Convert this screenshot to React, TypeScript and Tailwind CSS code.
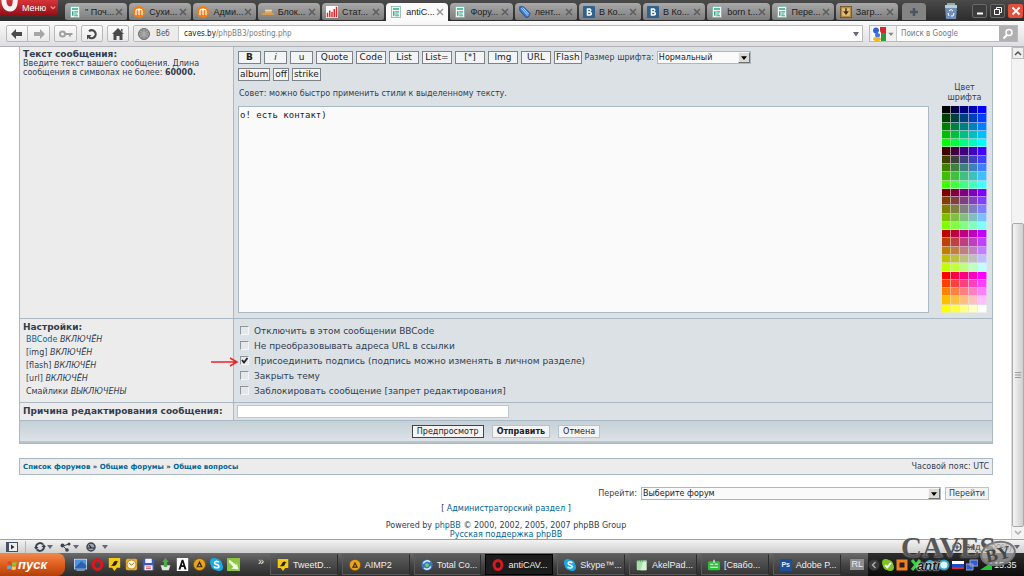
import React from "react";

type IconProps = { kind: string; className?: string };

function Icon({ kind, className = "size-3.5 shrink-0" }: IconProps) {
  const shapes: Record<string, React.ReactNode> = {
    page: (
      <>
        <rect x="2" y="0.5" width="12" height="15" fill="#eef7f2" stroke="#8aa" />
        <rect x="4" y="3" width="8" height="2" fill="#2fa88a" />
        <path d="M4 7h2v6H4zM7 7h5v1.5H7zM7 10h4v1.2H7zM7 12.4h5v1.2H7z" fill="#35ac8c" />
      </>
    ),
    moto: (
      <>
        <circle cx="8" cy="8" r="8" fill="#ee7f16" />
        <path d="M4 12V6.5a2 2 0 0 1 4 0V12M8 6.5a2 2 0 0 1 4 0V12M8 3v9" fill="none" stroke="#fff" strokeWidth="1.6" />
      </>
    ),
    hat: (
      <>
        <path d="M4 5h9v5H4z" fill="#e3b170" />
        <path d="M0 9h16v3H0z" fill="#d79a4f" />
        <path d="M4 5h9v1.5H4z" fill="#f6dcae" />
      </>
    ),
    chart: (
      <>
        <rect width="16" height="16" fill="#fff" />
        <path d="M1 9h2v6H1zM4 6h2v9H4zM7 8h2v7H7zM10 4h2v11h-2zM13 1h2v14h-2z" fill="#e3262c" />
      </>
    ),
    pencil: (
      <>
        <path d="M1 1l5 0 9 9-3 5-3 0L1 6z" fill="#3c7fd0" stroke="#173d78" />
        <path d="M3 3l9 10M5 2l8 9" stroke="#c4def8" strokeWidth="1.3" />
      </>
    ),
    vk: (
      <>
        <rect width="16" height="16" rx="1" fill="#2f628f" />
        <path d="M5 3h4a2.4 2.4 0 0 1 .8 4.6A2.7 2.7 0 0 1 9 13H5zM7 5v2h1.5a1 1 0 0 0 0-2zM7 9v2h1.8a1 1 0 0 0 0-2z" fill="#fff" fillRule="evenodd" />
      </>
    ),
    box: (
      <>
        <rect x="0.5" y="0.5" width="15" height="15" fill="#b98a45" stroke="#6d4a1c" />
        <rect x="3" y="3" width="10" height="10" fill="#e5c27c" />
        <path d="M7 3h2v4h3l-4 5-4-5h3z" fill="#4a3010" />
      </>
    ),
    opera: <ellipse cx="8" cy="8" rx="5.2" ry="6" fill="none" stroke="#d8181f" strokeWidth="4" />,
    tweet: (
      <>
        <path d="M1 0h14v12h-4l-3 4-3-4H1z" fill="#f6c912" />
        <path d="M3 9c3 0 3-3 5-5 1-1 3-1 3 0l2 .6-2 1c0 4-4 5-8 3.400z" fill="#2c2410" />
      </>
    ),
    aimp: (
      <>
        <circle cx="8" cy="8" r="7.500" fill="#e9a51e" stroke="#77500c" />
        <path d="M8 3.500l4 8H4zM8 7l-1.500 3h3z" fill="#3b2806" fillRule="evenodd" />
      </>
    ),
    total: (
      <>
        <circle cx="8" cy="8" r="7.500" fill="#3b77c4" />
        <path d="M3 6a5.500 5.500 0 0 1 9-2M13 10a5.500 5.500 0 0 1-9 2" stroke="#d9efff" strokeWidth="2" fill="none" />
        <circle cx="8" cy="8" r="2.500" fill="#6fcf6b" />
      </>
    ),
    skype: (
      <>
        <circle cx="5" cy="5" r="5" fill="#19a9e5" />
        <circle cx="11" cy="11" r="5" fill="#19a9e5" />
        <circle cx="8" cy="8" r="7" fill="#19a9e5" />
        <path d="M11 5.500C10 3.500 5.500 3.600 5.500 6S11 7.800 11 10.200 6 12.700 5 10.300" fill="none" stroke="#fff" strokeWidth="2" />
      </>
    ),
    skypeTray: (
      <>
        <circle cx="5" cy="5" r="5" fill="#7cc321" />
        <circle cx="11" cy="11" r="5" fill="#7cc321" />
        <circle cx="8" cy="8" r="7" fill="#7cc321" />
        <path d="M4 8l3 3 5-6" fill="none" stroke="#fff" strokeWidth="2.500" />
      </>
    ),
    akel: (
      <>
        <rect x="1" y="2" width="13" height="13" rx="1" fill="#a9dfae" />
        <path d="M10 2h4v13h-8z" fill="#d8f2d6" />
        <path d="M3 1v3M6 1v3M9 1v3M12 1v3" stroke="#4f9a58" />
      </>
    ),
    green: (
      <>
        <rect x="0" y="3" width="16" height="12" rx="2" fill="#2fbf3a" />
        <path d="M3 7h4M9 7h4M3 11h10M8 1v4" stroke="#fff" strokeWidth="1.500" />
      </>
    ),
    screen: (
      <>
        <rect x="0.500" y="1.500" width="15" height="12" fill="#4f93dc" stroke="#cfe2f5" />
        <path d="M1 12L9 4l6 5v4H1z" fill="#2a62ad" />
        <path d="M3 15h10" stroke="#cfd8e0" />
      </>
    ),
    clock: (
      <>
        <rect x="1" y="1" width="14" height="14" rx="2" fill="#e9a92f" />
        <circle cx="8" cy="8" r="5.500" fill="#fff3cf" stroke="#a97719" />
        <path d="M5 6l3 3 3-3" stroke="#705018" fill="none" />
      </>
    ),
    disk: (
      <>
        <path d="M1 1h14v14H1z" fill="#3c58c4" />
        <path d="M4 1h8v5H4zM3 9h10v6H3z" fill="#f2f4fb" />
        <path d="M5 11h6M5 13h6" stroke="#d33" />
      </>
    ),
    trash: (
      <>
        <path d="M2 9h12l-2 6H4z" fill="#dfe6e0" />
        <path d="M8 0l4 5h-2v6H6V5H4z" fill="#4cae46" />
      </>
    ),
    a: (
      <>
        <rect x="1" width="14" height="16" fill="#fff" />
        <path d="M3 14L7 2h2l4 12h-2.500l-1-3h-3l-1 3zM7.200 9h1.800L8 5.500z" fill="#111" fillRule="evenodd" />
      </>
    ),
    arrowPic: (
      <>
        <rect width="16" height="16" fill="#8ac640" />
        <path d="M3 2l9 7V5l2 9-9-1 3-2-6-6z" fill="#f4fbe9" />
      </>
    ),
  };
  return (
    <svg viewBox="0 0 16 16" className={className} aria-hidden="true">
      {shapes[kind]}
    </svg>
  );
}

const tabs = [
  { icon: "page", label: "\" Поч..." },
  { icon: "moto", label: "Сухи..." },
  { icon: "moto", label: "Адми..." },
  { icon: "hat", label: "Блок..." },
  { icon: "chart", label: "Стат..." },
  { icon: "page", label: "antiC...", active: true },
  { icon: "page", label: "Фору..." },
  { icon: "pencil", label: "лент..." },
  { icon: "vk", label: "В Ко..." },
  { icon: "vk", label: "В Ко..." },
  { icon: "page", label: "born t..." },
  { icon: "page", label: "Пере..." },
  { icon: "box", label: "Загр..." },
];

function TabBar() {
  return (
    <header className="flex h-[21px] items-stretch bg-linear-to-b from-[#4a4a4a] to-[#2c2c2c]">
      <button className="mr-[7px] flex h-4 w-[58px] shrink-0 items-center rounded-br bg-linear-to-b from-[#d8343a] to-[#8f0d12] text-[9px] text-white">
        <svg viewBox="0 0 20 16" className="h-4 w-5 shrink-0" aria-hidden="true">
          <path d="M4 -4c-1 9 2 13 6 13s6-4 5-13" fill="none" stroke="#f4f4f4" strokeWidth="5" />
        </svg>
        <span className="ml-0.5">Меню</span>
        <svg viewBox="0 0 8 8" className="ml-1 size-1.5" aria-hidden="true">
          <path d="M1 2l3 3 3-3" fill="none" stroke="#e99" strokeWidth="1.500" />
        </svg>
      </button>
      <nav className="flex min-w-0 flex-1 items-stretch gap-0.5 pt-[3px]">
        {tabs.map((t, i) => (
          <div
            key={i}
            className={
              t.active
                ? "flex min-w-0 flex-1 items-center rounded-t bg-[#fafafa] px-1 text-[#222]"
                : "mb-px flex min-w-0 flex-1 items-center rounded-t rounded-b-xs bg-linear-to-b from-[#a9a9a9] to-[#7d7d7d] px-1 text-[#1c1c1c]"
            }
          >
            <button className="flex min-w-0 flex-1 items-center gap-1 text-left whitespace-nowrap">
              <Icon kind={t.icon} className="size-3 shrink-0" />
              {t.label}
            </button>
            <button aria-label="Закрыть вкладку" className="shrink-0">
              <svg viewBox="0 0 8 8" className="size-2" aria-hidden="true">
                <path d="M1 1l6 6M7 1L1 7" stroke={t.active ? "#999" : "#5c5c5c"} strokeWidth="1.500" />
              </svg>
            </button>
          </div>
        ))}
      </nav>
      <div className="flex shrink-0 items-stretch pt-[3px] pl-1">
        <button aria-label="Новая вкладка" className="mb-px flex w-6 items-center justify-center rounded-t bg-[#848484]">
          <svg viewBox="0 0 10 10" className="size-2.5" aria-hidden="true">
            <path d="M5 1v8M1 5h8" stroke="#4c5364" strokeWidth="2.500" />
          </svg>
        </button>
      </div>
      <div className="flex shrink-0 items-center pl-[18px]">
        <button aria-label="Корзина">
          <svg viewBox="0 0 14 16" className="h-4 w-3.5" aria-hidden="true">
            <path d="M1 4h12l-1 12H2z" fill="#6f8fb8" />
            <path d="M1 2h12v3H1z" fill="#b9cbe0" />
            <path d="M3 0h8v2H3z" fill="#87b58f" />
            <path d="M5 8l2-1.500L9 8M10 10l-1 3H7M4 10l1 3" stroke="#fff" fill="none" />
          </svg>
        </button>
        <button aria-label="Свернуть" className="ml-3.5 flex h-3.5 w-[15px] items-center justify-center rounded-xs border border-[#6a6a6a] bg-[#3c3c3c]">
          <svg viewBox="0 0 10 10" className="size-2.5" aria-hidden="true"><path d="M2 6.500h6v2H2z" fill="#fff" /></svg>
        </button>
        <button aria-label="Развернуть" className="ml-[3px] flex h-3.5 w-[15px] items-center justify-center rounded-xs border border-[#6a6a6a] bg-[#3c3c3c]">
          <svg viewBox="0 0 10 10" className="size-2.5" aria-hidden="true"><path d="M3.500 3V1.500h5v5H7M1.500 3.500h5v5h-5z" fill="none" stroke="#fff" /></svg>
        </button>
        <button aria-label="Закрыть" className="mr-px ml-[3px] flex h-3.5 w-[15px] items-center justify-center rounded-xs bg-[#e0503c]">
          <svg viewBox="0 0 10 10" className="size-2.5" aria-hidden="true"><path d="M1.500 1.500l7 7M8.500 1.500l-7 7" stroke="#fff" strokeWidth="1.800" /></svg>
        </button>
      </div>
    </header>
  );
}

const navButton =
  "flex h-[17px] shrink-0 items-center justify-center rounded-xs border border-[#b9b9b9] bg-linear-to-b from-[#fdfdfd] to-[#e9e9e9]";

function AddressBar() {
  return (
    <div className="flex h-[26px] items-center border-b border-[#b0b4b8] bg-linear-to-b from-[#fafafa] to-[#dedede] pr-1.5 pl-1.5 font-['DejaVu_Sans_Condensed','DejaVu_Sans',sans-serif] text-[8px]">
      <div className="flex">
        <button aria-label="Назад" className={`${navButton} w-[22px] rounded-r-none`}>
          <svg viewBox="0 0 12 10" className="h-2.5 w-3" aria-hidden="true"><path d="M0 5l5-5v3h6v4H5v3z" fill="#4a4a4a" /></svg>
        </button>
        <button aria-label="Вперёд" className={`${navButton} w-[22px] rounded-l-none border-l-0`}>
          <svg viewBox="0 0 12 10" className="h-2.5 w-3" aria-hidden="true"><path d="M12 5L7 0v3H1v4h6v3z" fill="#a6a6a6" /></svg>
        </button>
      </div>
      <button aria-label="Пароли" className={`${navButton} ml-1 w-[23px]`}>
        <svg viewBox="0 0 14 8" className="h-2 w-3.5" aria-hidden="true">
          <circle cx="3.500" cy="4" r="2.500" fill="none" stroke="#a0a0a0" strokeWidth="2" />
          <path d="M6 4h7.500M11 4v2.500" stroke="#a0a0a0" strokeWidth="2" />
        </svg>
      </button>
      <button aria-label="Обновить" className={`${navButton} ml-1 w-[22px]`}>
        <svg viewBox="0 0 12 12" className="size-3" aria-hidden="true">
          <path d="M3 3.200a4 4 0 1 1-.2 5.800" fill="none" stroke="#4a4a4a" strokeWidth="2.200" />
          <path d="M1 11.500V7h4.500z" fill="#4a4a4a" />
        </svg>
      </button>
      <button aria-label="Домой" className={`${navButton} ml-1 w-[22px]`}>
        <svg viewBox="0 0 12 12" className="size-3" aria-hidden="true"><path d="M6 0l6 6h-1.500v6h-3V8h-3v4h-3V6H0zM9 1h1.500v3L9 2.500z" fill="#4a4a4a" /></svg>
      </button>
      <div className="ml-1 flex h-[17px] flex-1 items-stretch rounded-l-xs border border-[#b9b9b9] bg-white">
        <button className="flex w-[45px] shrink-0 items-center gap-1.5 border-r border-[#c8c8c8] bg-[#ececec] pl-1 text-[#555]">
          <svg viewBox="0 0 12 12" className="size-3" aria-hidden="true">
            <circle cx="6" cy="6" r="5.500" fill="#8c8c8c" stroke="#6d6d6d" />
            <path d="M1 6h10M6 1v10M2 3c3 2 5 2 8 0M2 9c3-2 5-2 8 0" stroke="#bdbdbd" strokeWidth="0.700" fill="none" />
          </svg>
          Веб
        </button>
        <a href="#" className="flex flex-1 items-center pl-[5px] text-[#7d7d7d]">
          <span className="text-[#1c1c1c]">caves.by</span>/phpBB3/posting.php
        </a>
        <button aria-label="История адресов" className="px-0.5">
          <svg viewBox="0 0 8 6" className="h-1.5 w-2" aria-hidden="true"><path d="M1 1h6L4 5.500z" fill="#667" /></svg>
        </button>
      </div>
      <div className="ml-1.5 flex h-[17px] w-[149px] shrink-0 items-stretch border border-[#b9b9b9] bg-white">
        <button aria-label="Выбор поиска" className="flex w-[27px] shrink-0 items-center gap-0.5 border-r border-[#c8c8c8] bg-[#f2f2f2] pl-0.5">
          <svg viewBox="0 0 14 14" className="size-3.5" aria-hidden="true">
            <rect width="14" height="14" fill="#fff" />
            <path d="M8 0h6v6H8z" fill="#d62828" />
            <path d="M9 6h5v8H9z" fill="#2d9a3c" />
            <circle cx="4" cy="3.500" r="3" fill="#2f66c9" />
            <circle cx="5.500" cy="8" r="2.500" fill="#3d79dc" />
            <ellipse cx="5" cy="12" rx="4" ry="2" fill="#edb62a" />
            <circle cx="7.500" cy="5.500" r="1.200" fill="#fff" />
          </svg>
          <svg viewBox="0 0 8 6" className="h-1 w-1.5" aria-hidden="true"><path d="M0 1h8L4 6z" fill="#888" /></svg>
        </button>
        <input aria-label="Поиск" placeholder="Поиск в Google" className="min-w-0 flex-1 pl-1 placeholder-[#777] outline-none" />
        <button aria-label="Найти" className="flex w-[18px] shrink-0 items-center justify-center bg-[#b0b0b0]">
          <svg viewBox="0 0 12 12" className="size-3" aria-hidden="true">
            <circle cx="7" cy="4.500" r="3" fill="none" stroke="#fff" strokeWidth="1.500" />
            <path d="M5 7l-3.500 3.500" stroke="#fff" strokeWidth="2" />
          </svg>
        </button>
      </div>
    </div>
  );
}

const bbWide = "h-[13px] w-[30px] border border-[#7d8288] bg-[#f3f4f5]";
const bbNarrow = "h-[13px] w-[23px] border border-[#7d8288] bg-[#f3f4f5]";
const bbFit = "h-[13px] border border-[#7d8288] bg-[#f3f4f5] px-px";

function Select({ label, id, className }: { label: string; id: string; className: string }) {
  return (
    <span className={`flex h-[13px] items-stretch border border-[#a9b8c2] bg-[#fafafa] text-[8px] ${className}`}>
      <select id={id} className="min-w-0 flex-1 appearance-none pl-px text-[#222] outline-none">
        <option>{label}</option>
      </select>
      <span className="flex w-3 items-center justify-center border border-t-[#f5f5f5] border-r-[#707070] border-b-[#707070] border-l-[#f5f5f5] bg-[#dcdad5]">
        <svg viewBox="0 0 8 5" className="h-1 w-1.5" aria-hidden="true"><path d="M0 0h8L4 5z" fill="#000" /></svg>
      </span>
    </span>
  );
}

const levels = [0, 64, 128, 191, 255];

function Palette() {
  const cells = levels.flatMap((r) => levels.flatMap((g) => levels.map((b) => `rgb(${r},${g},${b})`)));
  return (
    <div className="mr-[5px] w-[45px] shrink-0 text-center leading-[10px]">
      <div className="mb-[3px]">Цвет шрифта</div>
      <div className="grid h-[207px] grid-cols-5 grid-rows-25">
        {cells.map((c) => (
          <button key={c} aria-label={c} className="border-r border-b border-[#dfe6ea]/60" style={{ backgroundColor: c }} />
        ))}
      </div>
    </div>
  );
}

const options = [
  { label: "Отключить в этом сообщении BBCode" },
  { label: "Не преобразовывать адреса URL в ссылки" },
  { label: "Присоединить подпись (подпись можно изменять в личном разделе)", checked: true },
  { label: "Закрыть тему" },
  { label: "Заблокировать сообщение [запрет редактирования]" },
];

const statuses = [
  ["[img]", "ВКЛЮЧЁН"],
  ["[flash]", "ВКЛЮЧЁН"],
  ["[url]", "ВКЛЮЧЁН"],
  ["Смайлики", "ВЫКЛЮЧЕНЫ"],
];

const row = "grid grid-cols-[214px_1fr] border-b border-[#a9b8c2]";
const leftCell = "border-r border-[#a9b8c2] bg-[#ececec] px-[3px]";
const link = "text-[#006597]";

function PostForm() {
  return (
    <form className="border border-t-0 border-[#a9b8c2] bg-[#dce1e5]" onSubmit={(e) => e.preventDefault()}>
      <div className={row}>
        <div className={`${leftCell} pt-[3px] text-[8px] leading-[9px]`}>
          <label htmlFor="message" className="block text-[9px] font-bold">Текст сообщения:</label>
          <p>Введите текст вашего сообщения. Длина сообщения в символах не более: <b>60000.</b></p>
        </div>
        <div className="flex flex-col pb-[5px] pl-1">
          <div className="flex gap-[3px] pt-1 text-[9px] leading-[11px] text-[#222]">
            <button className={`${bbNarrow} font-bold`}>B</button>
            <button className={`${bbNarrow} italic`}>i</button>
            <button className={bbNarrow}>u</button>
            <button className="h-[13px] w-[37px] border border-[#7d8288] bg-[#f3f4f5]">Quote</button>
            <button className={bbWide}>Code</button>
            <button className={bbWide}>List</button>
            <button className={bbWide}>List=</button>
            <button className={bbWide}>[*]</button>
            <button className={bbWide}>Img</button>
            <button className={bbWide}>URL</button>
            <button className={bbFit}>Flash</button>
            <label htmlFor="size" className="self-center text-[8px] text-[#323d4f]">Размер шрифта:</label>
            <Select id="size" label="Нормальный" className="w-[94px]" />
          </div>
          <div className="flex gap-[3px] pt-1 text-[9px] leading-[11px] text-[#222]">
            <button className={bbFit}>album</button>
            <button className={bbFit}>off</button>
            <button className={bbFit}>strike</button>
          </div>
          <div className="flex items-end pt-0.5">
            <div className="mr-[13px] flex-1">
              <p className="pb-1.5 pl-px text-[8px] leading-3">Совет: можно быстро применить стили к выделенному тексту.</p>
              <textarea
                id="message"
                defaultValue="о! есть контакт)"
                className="block h-[207px] w-full resize-none border border-[#a9b8c2] bg-[#fafafa] px-px pt-0.5 font-['DejaVu_Sans_Mono',monospace] text-[9px] leading-3 text-[#222] outline-none"
              />
            </div>
            <Palette />
          </div>
        </div>
      </div>

      <div className={row}>
        <div className={`${leftCell} pt-[3px] pb-1 text-[8px]`}>
          <h2 className="text-[9px] leading-[11px] font-bold">Настройки:</h2>
          <ul className="pl-[3px] text-[8px] leading-[13px]">
            <li><a href="#" className={link}>BBCode</a> <em>ВКЛЮЧЁН</em></li>
            {statuses.map(([a, b]) => (
              <li key={a}>{a} <em>{b}</em></li>
            ))}
          </ul>
        </div>
        <div className="relative pt-[5px] pl-1.5 text-[9px] leading-[15px]">
          {options.map((o) => (
            <label key={o.label} className="flex items-center">
              <span className="mr-[5px] mb-0.5 grid">
                <input
                  type="checkbox"
                  defaultChecked={o.checked}
                  className="peer col-start-1 row-start-1 size-[9px] appearance-none border border-t-[#8f979c] border-r-[#f4f6f7] border-b-[#f4f6f7] border-l-[#8f979c] bg-[#e4e8ea]"
                />
                <svg viewBox="0 0 9 9" className="pointer-events-none invisible col-start-1 row-start-1 size-[9px] peer-checked:visible" aria-hidden="true">
                  <path d="M2 4l2 2.500L7.500 2" fill="none" stroke="#222" strokeWidth="1.800" />
                </svg>
              </span>
              {o.label}
            </label>
          ))}
          <svg viewBox="0 0 28 10" className="absolute top-[38px] -left-[23px] h-2.5 w-7" aria-hidden="true">
            <path d="M0 5h26M19 1l7 4-7 4" fill="none" stroke="#e8262a" strokeWidth="1.500" />
          </svg>
        </div>
      </div>

      <div className={row}>
        <label htmlFor="reason" className={`${leftCell} text-[9px] leading-[17px] font-bold`}>Причина редактирования сообщения:</label>
        <div className="flex items-center pl-[3px]">
          <input id="reason" className="h-[13px] w-[272px] border border-[#c0c8ce] bg-white outline-none" />
        </div>
      </div>

      <div className="flex h-[22px] items-center justify-center gap-2 border-b-2 border-[#b8c4cc] bg-linear-to-b from-[#c5d0d8] to-[#dde3e7] text-[8px] text-[#222]">
        <button className="h-[13px] border border-[#444] bg-[#f4f4f4] px-1 leading-[11px]">Предпросмотр</button>
        <button className="h-[13px] border border-[#b9c3ca] bg-[#f4f4f4] px-1 leading-[11px] font-bold">Отправить</button>
        <button className="h-[13px] border border-[#b9c3ca] bg-[#f4f4f4] px-1 leading-[11px]">Отмена</button>
      </div>
    </form>
  );
}

const tasks = [
  { icon: "tweet", label: "TweetD..." },
  { icon: "aimp", label: "AIMP2" },
  { icon: "total", label: "Total Co..." },
  { icon: "opera", label: "antiCAV...", active: true },
  { icon: "skype", label: "Skype™..." },
  { icon: "akel", label: "AkelPad..." },
  { icon: "green", label: "[Свабо..." },
  { icon: "ps", label: "Adobe P..." },
];

const quick = ["screen", "opera", "tweet", "clock", "disk", "trash", "a", "aimp", "skype", "arrowPic"];

function StatusBar() {
  const caret = (
    <svg viewBox="0 0 6 4" className="h-1 w-1.5" aria-hidden="true"><path d="M0 0h6L3 4z" fill="#667" /></svg>
  );
  return (
    <div className="flex h-3.5 items-center border-t border-[#a0a0a0] bg-linear-to-b from-[#f3f3f3] to-[#cfcfcf] pl-1.5">
      <button aria-label="Панель" className="flex items-center">
        <svg viewBox="0 0 12 10" className="h-2.5 w-3" aria-hidden="true">
          <rect x="0.500" y="0.500" width="11" height="9" fill="#eee" stroke="#445066" />
          <path d="M1 1h2v8H1z" fill="#445066" /><path d="M5 2.500L8.500 5 5 7.500z" fill="#333" />
        </svg>
      </button>
      <span className="mx-[7px] h-3 w-px bg-[#b5b5b5]" />
      <button aria-label="Синхронизация" className="ml-px flex items-center gap-px">
        <svg viewBox="0 0 12 10" className="h-2.5 w-3" aria-hidden="true">
          <path d="M2 5a4 4 0 0 1 7-2.500M10 5a4 4 0 0 1-7 2.500" fill="none" stroke="#3c4350" strokeWidth="2" />
          <path d="M7.500 5h4.500L9.800 2zM0 5h4.500L2.200 8z" fill="#3c4350" />
        </svg>
        {caret}
      </button>
      <button aria-label="Unite" className="ml-[7px] flex items-center gap-px">
        <svg viewBox="0 0 12 10" className="h-2.5 w-3" aria-hidden="true">
          <path d="M3 4l6-2M3 4l4 4" stroke="#3c4350" />
          <circle cx="2.500" cy="3.500" r="2" fill="#3c4350" /><circle cx="9" cy="2" r="1.500" fill="#3c4350" /><circle cx="7" cy="8" r="1.800" fill="#3c4350" />
        </svg>
        {caret}
      </button>
      <button aria-label="Turbo" className="ml-[7px] flex items-center gap-1.5">
        <svg viewBox="0 0 10 10" className="size-2.5" aria-hidden="true">
          <circle cx="5" cy="5" r="4" fill="#9aa3b0" stroke="#3c4350" strokeWidth="1.500" />
          <path d="M5 5.500L3 3M2 6h6" stroke="#222" strokeWidth="1.200" />
        </svg>
        {caret}
      </button>
      <button className="mr-1 ml-auto flex items-center gap-0.5 text-[#444]">
        <svg viewBox="0 0 10 10" className="size-2.5" aria-hidden="true">
          <circle cx="5" cy="5" r="4" fill="none" stroke="#3c4350" strokeWidth="1.500" />
          <path d="M5 2.500v5M2.500 5h5" stroke="#3c4350" strokeWidth="1.200" />
        </svg>
        Вид (100%)
        {caret}
      </button>
    </div>
  );
}

function Watermark() {
  return (
    <div className="pointer-events-none absolute right-0 bottom-0 h-11 w-[123px]">
      <div className="font-['Liberation_Serif',serif] text-[29px] leading-[30px] font-bold text-[#444]/90 [text-shadow:0_0_2px_#ddd]">CAVES</div>
      <div className="absolute bottom-0.5 left-4 text-[13px] leading-4 font-bold text-[#1a1a1a] italic [text-shadow:0_0_2px_#fff,0_0_2px_#fff]">anti</div>
      <div className="absolute right-2 bottom-2.5 flex h-[25px] w-9 -rotate-12 items-center justify-center rounded-[50%] border-2 border-[#777] bg-[#c9c9c9]/60 font-['Liberation_Serif',serif] text-[18px] font-bold text-[#444]">BY</div>
    </div>
  );
}

function Taskbar() {
  return (
    <footer className="flex h-[23px] items-stretch bg-linear-to-b from-[#6c6c6c] via-[#454545] to-[#2c2c2c] text-[9px] text-[#eee]">
      <button className="flex w-[65px] shrink-0 items-center gap-px rounded-r-lg bg-linear-to-b from-[#f08a4a] via-[#df5f1c] to-[#b23f0a] pl-[7px] text-[13px] font-bold text-white italic">
        <svg viewBox="0 0 12 12" className="size-2.5" aria-hidden="true">
          <path d="M1 2q2-1 4.500 0L5 6Q3 5 .5 6z" fill="#e5432a" /><path d="M6.500 2.400q2 1 5 0L11 6.500q-2 1-5 0z" fill="#8cc63f" />
          <path d="M.4 7q2-1 4.500 0l-.5 4q-2-1-4.400 0z" fill="#5fa8e8" /><path d="M5.900 7.400q2 1 5 0l-.5 4q-2 1-5 0z" fill="#f8d548" />
        </svg>
        пуск
      </button>
      <div className="ml-[9px] flex shrink-0 items-center gap-1">
        {quick.map((k) => (
          <button key={k} aria-label={k}><Icon kind={k} className="size-[13px]" /></button>
        ))}
      </div>
      <span className="ml-[18px] w-3 shrink-0 text-[11px] leading-4">»</span>
      <nav className="flex min-w-0 flex-1 gap-1 py-px">
        {tasks.map((t) => (
          <button
            key={t.label}
            className={
              t.active
                ? "flex min-w-0 flex-1 items-center gap-1 border border-black bg-[#1c1c1c] pl-1.5 whitespace-nowrap"
                : "flex min-w-0 flex-1 items-center gap-1 border border-[#5b5b5b] border-r-[#2c2c2c] bg-linear-to-b from-[#5d5d5d] to-[#383838] pl-1.5 whitespace-nowrap"
            }
          >
            {t.icon === "ps" ? (
              <span className="size-3 shrink-0 bg-[#1d4f9c] text-center text-[7px] leading-3 font-bold">Ps</span>
            ) : (
              <Icon kind={t.icon} className="size-3 shrink-0" />
            )}
            {t.label}
          </button>
        ))}
      </nav>
      <span className="mr-1 ml-2.5 self-center bg-[#8e8e8e] px-px leading-[11px]">RL</span>
      <div className="flex w-[156px] shrink-0 items-center gap-0.5 bg-linear-to-b from-[#2e2e2e] to-[#0c0c0c]">
        <svg viewBox="0 0 12 12" className="size-3" aria-hidden="true"><circle cx="6" cy="6" r="5.500" fill="#3a3a3a" /><path d="M7.500 3l-3 3 3 3" fill="none" stroke="#aaa" strokeWidth="1.500" /></svg>
        <Icon kind="skypeTray" className="size-3" />
        <svg viewBox="0 0 12 12" className="size-3" aria-hidden="true"><rect x="2" y="2" width="8" height="8" fill="#222" stroke="#f08022" strokeWidth="3" /></svg>
        <svg viewBox="0 0 12 12" className="size-3" aria-hidden="true"><path d="M2 1l8 10M10 1L2 11" stroke="#3fd04a" strokeWidth="3" /></svg>
        <svg viewBox="0 0 12 12" className="size-3" aria-hidden="true"><circle cx="6" cy="6" r="5" fill="#49a7c8" /></svg>
        <svg viewBox="0 0 12 12" className="size-3" aria-hidden="true"><circle cx="6" cy="6" r="4.500" fill="#e3f4f8" stroke="#2f9fc0" strokeWidth="2" /></svg>
        <svg viewBox="0 0 12 12" className="size-3" aria-hidden="true"><path d="M0 2h12v3H0z" fill="#fff" /><path d="M0 5h12v3H0z" fill="#2448c8" /><path d="M0 8h12v2H0z" fill="#d62a2a" /></svg>
        <svg viewBox="0 0 12 12" className="size-3" aria-hidden="true"><path d="M4 1h8v6H4zM0 5h7v6H0z" fill="#3158d8" stroke="#9ab" /></svg>
        <svg viewBox="0 0 12 12" className="size-3" aria-hidden="true"><path d="M0 11L12 3v8z" fill="#27c43a" /></svg>
        <time>15:35</time>
      </div>
    </footer>
  );
}

export default function App() {
  return (
    <div className="relative flex min-h-screen flex-col bg-white font-['Liberation_Sans',Arial,sans-serif] text-[9px] leading-3">
      <TabBar />
      <AddressBar />
      <div className="flex flex-1">
        <main className="min-w-0 flex-1 pr-[18px] pl-[19px] font-['DejaVu_Sans',Verdana,sans-serif] text-[8px] text-[#323d4f]">
          <PostForm />
          <div className="mt-3.5 flex h-[17px] items-center justify-between border border-[#a9b8c2] bg-[#ececec] px-[3px] text-[8px]">
            <nav className="text-[7px] font-bold">
              <a href="#" className={link}>Список форумов</a> » <a href="#" className={link}>Общие форумы</a> » <a href="#" className={link}>Общие вопросы</a>
            </nav>
            <span>Часовой пояс: UTC</span>
          </div>
          <div className="mt-3 mr-1 flex items-center justify-end">
            <label htmlFor="forum" className="mr-1">Перейти:</label>
            <Select id="forum" label="Выберите форум" className="w-[300px]" />
            <button className="ml-1 h-[13px] border border-[#b9c3ca] bg-[#f2f2f2] px-[3px] leading-[11px]">Перейти</button>
          </div>
          <p className="mt-[3px] text-center">[ <a href="#" className={link}>Администраторский раздел</a> ]</p>
          <p className="mt-1.5 text-center leading-[9px]">
            Powered by <a href="#" className={link}>phpBB</a> © 2000, 2002, 2005, 2007 phpBB Group<br />
            <a href="#" className={link}>Русская поддержка phpBB</a>
          </p>
        </main>
        <aside className="flex w-[13px] flex-col border-l border-[#ddd] bg-[#f3f3f3]">
          <button aria-label="Вверх" className="flex h-3 items-center justify-center border border-[#bbb] bg-[#eee]">
            <svg viewBox="0 0 8 6" className="h-1.5 w-2" aria-hidden="true"><path d="M1 5l3-3 3 3" fill="none" stroke="#555" strokeWidth="1.500" /></svg>
          </button>
          <div className="flex-[165]" />
          <div className="flex flex-[303] items-center justify-center rounded-xs border border-[#aaa] bg-linear-to-r from-[#f5f5f5] to-[#cfcfcf]">
            <svg viewBox="0 0 6 6" className="size-1.5" aria-hidden="true"><path d="M0 .5h6M0 3h6M0 5.500h6" stroke="#999" /></svg>
          </div>
          <button aria-label="Вниз" className="flex h-3 items-center justify-center">
            <svg viewBox="0 0 8 6" className="h-1.5 w-2" aria-hidden="true"><path d="M1 1l3 3 3-3" fill="none" stroke="#aaa" strokeWidth="1.500" /></svg>
          </button>
        </aside>
      </div>
      <StatusBar />
      <Taskbar />
      <Watermark />
    </div>
  );
}
